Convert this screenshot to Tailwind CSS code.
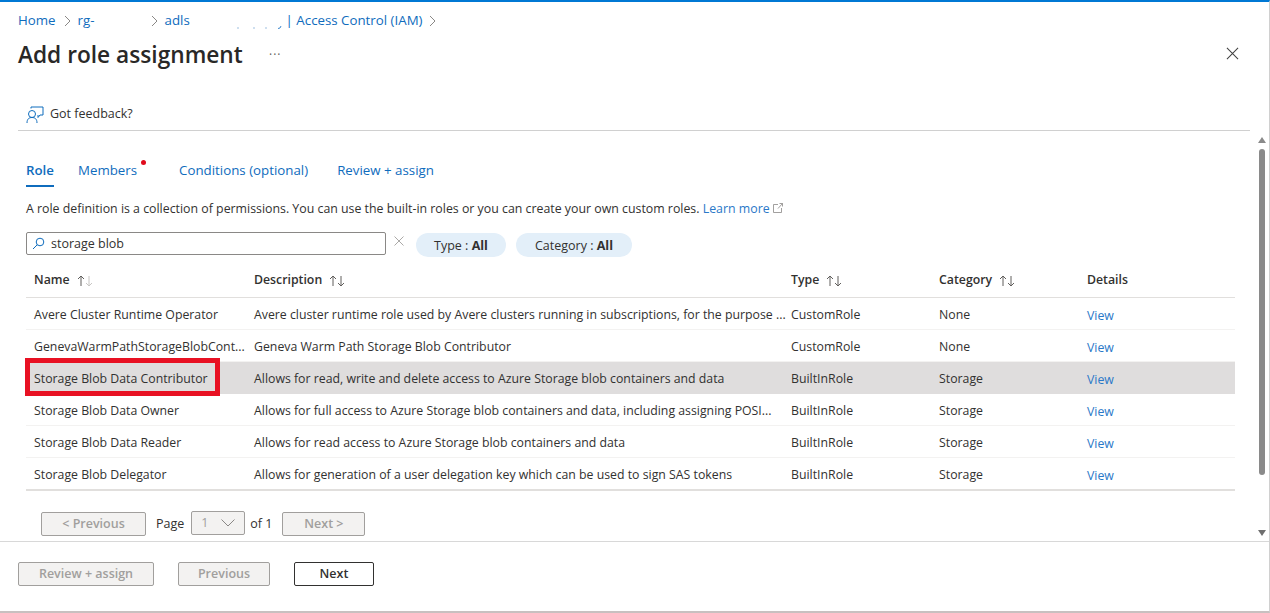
<!DOCTYPE html>
<html lang="en">
<head>
    <meta charset="UTF-8">
    <title>Add role assignment</title>
    <script src="https://cdn.jsdelivr.net/npm/@tailwindcss/browser@4"></script>
</head>
<body class="bg-white overflow-hidden">
<div class="relative w-[1270px] h-[613px] flex flex-col font-['Open_Sans','Noto_Sans',sans-serif] text-[12.5px] text-[#323130] border-t-2 border-b-2 border-r border-t-[#0078d4] border-b-[#c8c0c0] border-r-[#d0d0d0] overflow-hidden">

    <!-- header -->
    <div class="flex items-center h-[36px] pl-[18px] pt-[2px] text-[13.3px] text-[#0f6cbd]">
        <span>Home</span>
        <svg class="w-[8px] h-[12px] ml-[8px] mr-[6px]" viewBox="0 0 8 12" fill="none" stroke="#8a8886"><path d="M1 1l5 5-5 5"/></svg>
        <span class="w-[73px]">rg-</span>
        <svg class="w-[8px] h-[12px] mr-[6px]" viewBox="0 0 8 12" fill="none" stroke="#8a8886"><path d="M1 1l5 5-5 5"/></svg>
        <span class="relative w-[121px]">adls
            <svg class="absolute left-0 top-0 w-[121px] h-[20px]" viewBox="0 0 121 20" fill="none" stroke="#9dbfe0" stroke-width="1"><path d="M72 17h2M88 17h2M100 17h2"/><path stroke="#3f8ad0" d="M113 17.500l2-.5 1-2"/></svg></span>
        <span>| Access Control (IAM)</span>
        <svg class="w-[8px] h-[12px] ml-[6px]" viewBox="0 0 8 12" fill="none" stroke="#8a8886"><path d="M1 1l5 5-5 5"/></svg>
    </div>
    <div class="flex items-center h-[32px] -mt-[1px] pl-[18px] pr-[30px]">
        <h1 class="text-[22.7px] font-semibold text-[#292827] w-[251px] pt-[4px]">Add role assignment</h1>
        <span class="text-[#605e5c] text-[12px] tracking-[1px] mt-[4px]">···</span>
        <svg class="ml-auto w-[13px] h-[13px]" viewBox="0 0 14 14" fill="none" stroke="#404040" stroke-width="1.1"><path d="M1 1l12 12M13 1L1 13"/></svg>
    </div>

    <div class="flex items-center h-[29px] mt-[30px] ml-[18px] w-[1224px] pl-[8px] box-content pt-[1px] pb-[1px] border-b border-[#d0d0d0]">
        <svg class="w-[18px] h-[18px] mr-[6px]" viewBox="0 0 18 18" fill="none" stroke="#0f6cbd" stroke-width="1"><path d="M5 2.500V1h12v8h-3l-2 2.500V9"/><circle cx="6" cy="8" r="3.500"/><path d="M1 17c0-4 2-5.500 5-5.500s5 1.500 5 5.500"/></svg>
        <span>Got feedback?</span>
    </div>

    <div class="relative flex flex-1 min-h-0">
        <main class="w-[1250px] pl-[26px] flex flex-col">
            <!-- tabs -->
            <div class="flex items-start h-[41px] mt-[29px] text-[#0f6cbd] text-[13.3px]">
                <div class="h-[27px] border-b-2 border-[#0f6cbd] font-semibold pt-[1px]">Role</div>
                <div class="relative ml-[24px] pt-[1px]">Members<span class="absolute -right-[9px] top-[0px] w-[5px] h-[5px] rounded-full bg-[#e00b1c]"></span></div>
                <div class="ml-[42px] pt-[1px]">Conditions (optional)</div>
                <div class="ml-[29px] pt-[1px]">Review + assign</div>
            </div>

            <p class="h-[18px] -mt-[1px] leading-[18px] text-[12.35px]">A role definition is a collection of permissions. You can use the built-in roles or you can create your own custom roles. <span class="text-[#2a78c8]">Learn more</span>
                <svg class="inline w-[10px] h-[10px] -mt-[3px]" viewBox="0 0 10 10" fill="none" stroke="#8a8886" stroke-width=".8"><path d="M5 1.500H.5v8h8V5M5 5.500L9.500.5M6.500.5h3v3"/></svg></p>

            <!-- search and filters -->
            <div class="flex items-center h-[26px] mt-[14px]">
                <div class="flex items-center w-[360px] h-[23px] border border-[#8a8886] rounded-[2px] pl-[5px] -mt-[3px]">
                    <svg class="w-[13px] h-[13px] mr-[6px]" viewBox="0 0 13 13" fill="none" stroke="#0f6cbd" stroke-width="1"><circle cx="8" cy="5" r="3.800"/><path d="M5.200 7.800L1 12"/></svg>
                    <span class="pt-[2px]">storage blob</span>
                </div>
                <svg class="w-[10px] h-[10px] ml-[8px] -mt-[9px]" viewBox="0 0 10 10" fill="none" stroke="#a19f9d" stroke-width=".9"><path d="M.5.5l9 9M9.500.5l-9 9"/></svg>
                <div class="flex items-center justify-center w-[90px] h-[24px] ml-[12px] pt-[2px] rounded-full bg-[#e3eff9]">Type :&nbsp;<b class="font-bold">All</b></div>
                <div class="flex items-center justify-center w-[116px] h-[24px] ml-[10px] pt-[2px] rounded-full bg-[#e3eff9]">Category :&nbsp;<b class="font-bold">All</b></div>
            </div>

            <!-- table -->
            <div class="w-[1209px] mt-[8px] text-[12.3px]">
                <div class="grid grid-cols-[220px_537px_148px_148px_1fr] h-[32px] items-center pl-[8px] pb-[2px] border-b border-[#e1dfdd] font-semibold">
                    <div class="flex items-center gap-[7px]">Name
                        <svg class="w-[17px] h-[12px]" viewBox="0 0 17 12" fill="none" stroke-width="1"><path stroke="#605e5c" d="M4 11V1M1 4l3-3 3 3"/><path stroke="#c8c6c4" d="M12 1v10M9 8l3 3 3-3"/></svg></div>
                    <div class="flex items-center gap-[7px]">Description
                        <svg class="w-[17px] h-[12px]" viewBox="0 0 17 12" fill="none" stroke="#605e5c" stroke-width="1"><path d="M4 11V1M1 4l3-3 3 3M12 1v10M9 8l3 3 3-3"/></svg></div>
                    <div class="flex items-center gap-[7px]">Type
                        <svg class="w-[17px] h-[12px]" viewBox="0 0 17 12" fill="none" stroke="#605e5c" stroke-width="1"><path d="M4 11V1M1 4l3-3 3 3M12 1v10M9 8l3 3 3-3"/></svg></div>
                    <div class="flex items-center gap-[7px]">Category
                        <svg class="w-[17px] h-[12px]" viewBox="0 0 17 12" fill="none" stroke="#605e5c" stroke-width="1"><path d="M4 11V1M1 4l3-3 3 3M12 1v10M9 8l3 3 3-3"/></svg></div>
                    <div>Details</div>
                </div>

                <div class="grid grid-cols-[220px_537px_148px_148px_1fr] h-[32px] items-center pl-[8px] pt-[4px] border-b border-[#f3f2f1]">
                    <div>Avere Cluster Runtime Operator</div>
                    <div>Avere cluster runtime role used by Avere clusters running in subscriptions, for the purpose ...</div>
                    <div>CustomRole</div><div>None</div><div class="text-[#2a78c8] pt-[1px]">View</div>
                </div>
                <div class="grid grid-cols-[220px_537px_148px_148px_1fr] h-[32px] items-center pl-[8px] pt-[4px] border-b border-[#f3f2f1]">
                    <div>GenevaWarmPathStorageBlobCont...</div>
                    <div>Geneva Warm Path Storage Blob Contributor</div>
                    <div>CustomRole</div><div>None</div><div class="text-[#2a78c8] pt-[1px]">View</div>
                </div>
                <div class="relative grid grid-cols-[220px_537px_148px_148px_1fr] h-[32px] items-center pl-[8px] pt-[3px] bg-[#dfdddd]">
                    <div>Storage Blob Data Contributor</div>
                    <div>Allows for read, write and delete access to Azure Storage blob containers and data</div>
                    <div>BuiltInRole</div><div>Storage</div><div class="text-[#2a78c8] pt-[1px]">View</div>
                    <div class="absolute -left-[1px] -top-[4px] w-[195px] h-[38px] border-[5px] border-[#e81123]"></div>
                </div>
                <div class="grid grid-cols-[220px_537px_148px_148px_1fr] h-[32px] items-center pl-[8px] pt-[4px] border-b border-[#f3f2f1]">
                    <div>Storage Blob Data Owner</div>
                    <div>Allows for full access to Azure Storage blob containers and data, including assigning POSI...</div>
                    <div>BuiltInRole</div><div>Storage</div><div class="text-[#2a78c8] pt-[1px]">View</div>
                </div>
                <div class="grid grid-cols-[220px_537px_148px_148px_1fr] h-[32px] items-center pl-[8px] pt-[4px] border-b border-[#f3f2f1]">
                    <div>Storage Blob Data Reader</div>
                    <div>Allows for read access to Azure Storage blob containers and data</div>
                    <div>BuiltInRole</div><div>Storage</div><div class="text-[#2a78c8] pt-[1px]">View</div>
                </div>
                <div class="grid grid-cols-[220px_537px_148px_148px_1fr] h-[33px] items-center pl-[8px] pt-[4px] border-b-2 border-[#e1dfdd]">
                    <div>Storage Blob Delegator</div>
                    <div>Allows for generation of a user delegation key which can be used to sign SAS tokens</div>
                    <div>BuiltInRole</div><div>Storage</div><div class="text-[#2a78c8] pt-[1px]">View</div>
                </div>
            </div>

            <!-- pagination -->
            <div class="flex items-center h-[24px] mt-[21px] ml-[15px]">
                <div class="flex items-center justify-center w-[105px] h-[24px] border border-[#a19f9d] rounded-[2px] bg-[#f3f2f1] text-[#a19f9d] font-semibold">&lt; Previous</div>
                <span class="ml-[10px]">Page</span>
                <div class="flex items-center justify-between w-[54px] h-[24px] -mt-[2px] ml-[7px] pl-[9px] pr-[9px] border border-[#a19f9d] rounded-[2px] bg-[#f3f2f1] text-[#a19f9d]">1
                    <svg class="w-[14px] h-[8px]" viewBox="0 0 14 8" fill="none" stroke="#8a8886"><path d="M.5.5L7 7l6.500-6.500"/></svg></div>
                <span class="ml-[5px]">of 1</span>
                <div class="flex items-center justify-center w-[83px] h-[24px] ml-[10px] border border-[#a19f9d] rounded-[2px] bg-[#f3f2f1] text-[#a19f9d] font-semibold">Next &gt;</div>
            </div>
        </main>

        <!-- scrollbar -->
        <div class="flex flex-col items-center w-[10px] ml-[7px] pt-[6px]">
            <svg class="w-[8px] h-[6px]" viewBox="0 0 8 6" fill="#8a8a8a"><path d="M4 0l4 6H0z"/></svg>
            <div class="w-[6px] h-[326px] mt-[6px] rounded-full bg-[#8a8a8a]"></div>
            <svg class="w-[8px] h-[6px] mt-[55px]" viewBox="0 0 8 6" fill="#6f6f6f"><path d="M0 0h8L4 6z"/></svg>
        </div>
    </div>

    <!-- footer -->
    <div class="flex items-start h-[70px] pl-[18px] pt-[20px] border-t border-[#d8d8d8]">
        <div class="flex items-center justify-center w-[136px] h-[24px] border border-[#a19f9d] rounded-[2px] bg-[#f3f2f1] text-[#a19f9d] font-semibold">Review + assign</div>
        <div class="flex items-center justify-center w-[92px] h-[24px] ml-[24px] border border-[#a19f9d] rounded-[2px] bg-[#f3f2f1] text-[#a19f9d] font-semibold">Previous</div>
        <div class="flex items-center justify-center w-[80px] h-[24px] ml-[24px] border border-[#323130] rounded-[2px] font-semibold">Next</div>
    </div>
</div>
</body>
</html>
